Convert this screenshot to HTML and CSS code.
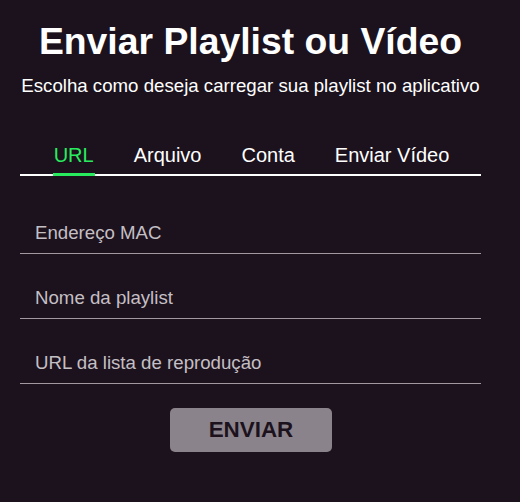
FILE: index.html
```html
<!DOCTYPE html>
<html lang="pt">
<head>
<meta charset="utf-8">
<link rel="stylesheet" href="styles.css">
</head>
<body>
<div class="panel">
  <h1 class="title">Enviar Playlist ou Vídeo</h1>
  <p class="subtitle">Escolha como deseja carregar sua playlist no aplicativo</p>
  <div class="tabs">
    <span class="tab active">URL</span>
    <span class="tab">Arquivo</span>
    <span class="tab">Conta</span>
    <span class="tab">Enviar Vídeo</span>
  </div>
  <form class="form">
    <div class="field"><input class="input" type="text" placeholder="Endereço MAC"></div>
    <div class="field"><input class="input" type="text" placeholder="Nome da playlist"></div>
    <div class="field"><input class="input" type="text" placeholder="URL da lista de reprodução"></div>
    <div class="actions"><button class="submit" type="button">ENVIAR</button></div>
  </form>
</div>
</body>
</html>
```
FILE: styles.css
```css
html, body {
  margin: 0;
  padding: 0;
  background: #1c121d;
}
body {
  font-family: "Liberation Sans", Arial, sans-serif;
  color: #ffffff;
}
.panel {
  width: 461px;
  margin-left: 20px;
  padding-top: 20px;
  text-align: center;
}
.title {
  margin: 0;
  font-size: 37.33px;
  font-weight: bold;
  line-height: 43px;
}
.subtitle {
  margin: 12px 0 0;
  font-size: 18.67px;
  line-height: 21.5px;
}
.tabs {
  margin-top: 47px;
  display: flex;
  justify-content: center;
  border-bottom: 2px solid #ffffff;
}
.tab {
  font-size: 20px;
  line-height: 23px;
  padding: 0 20px 6px;
  margin: 0 0 -2px;
  border-bottom: 3px solid transparent;
  color: #ffffff;
}
.tab.active {
  color: #28ec5e;
  border-bottom-color: #28ec5e;
  padding-left: 1px;
  padding-right: 1px;
  margin-left: 21px;
  margin-right: 19px;
}
.form {
  display: flex;
  flex-direction: column;
  margin-top: 13px;
}
.field {
  padding-top: 34px;
  border-bottom: 1px solid #a09aa0;
}
.input {
  display: block;
  width: 100%;
  box-sizing: border-box;
  border: 0;
  background: transparent;
  padding: 0 0 8.5px 15px;
  font-family: "Liberation Sans", Arial, sans-serif;
  font-size: 18.67px;
  line-height: 21.5px;
  height: 30px;
  color: #ffffff;
  outline: none;
}
.input::placeholder {
  color: #c4bfc4;
  opacity: 1;
}
.actions {
  display: flex;
  justify-content: center;
  margin-top: 24px;
}
.submit {
  width: 162px;
  height: 44px;
  margin-left: 1px;
  border: 0;
  border-radius: 5px;
  background: #8b838b;
  color: #1c121d;
  font-family: "Liberation Sans", Arial, sans-serif;
  font-size: 22.4px;
  font-weight: bold;
  padding: 0;
}
```
